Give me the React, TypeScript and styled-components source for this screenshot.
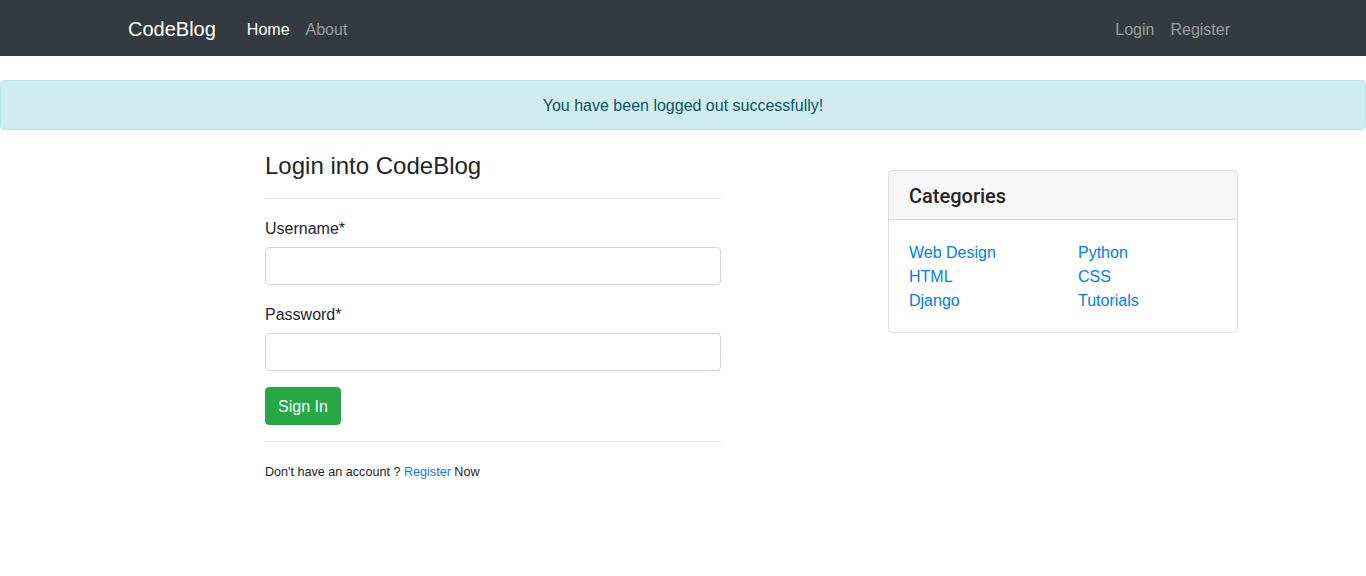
import React from "react";
import styled, { createGlobalStyle } from "styled-components";

const Global = createGlobalStyle`
  html, body { margin: 0; padding: 0; background: #fff; }
  body {
    font-family: "Liberation Sans", Arial, sans-serif;
    font-size: 16px;
    line-height: 1.5;
    color: #212529;
  }
  * { box-sizing: border-box; }
`;

const NavBar = styled.nav`
  background: #343a40;
  height: 56px;
`;

const NavInner = styled.div`
  width: 1140px;
  margin: 0 auto;
  padding: 0 15px;
  height: 100%;
  display: flex;
  align-items: center;
`;

const Brand = styled.a`
  font-size: 20px;
  line-height: 30px;
  padding-top: 2px;
  color: #fff;
  text-decoration: none;
  margin-right: 23px;
`;

const NavGroup = styled.div<{ $right?: boolean }>`
  display: flex;
  margin-left: ${(p) => (p.$right ? "auto" : "0")};
`;

const NavLink = styled.a<{ $active?: boolean }>`
  padding: 10px 8px 6px;
  color: ${(p) => (p.$active ? "#fff" : "rgba(255,255,255,0.5)")};
  text-decoration: none;
  font-size: 16px;
  line-height: 24px;
`;

const Alert = styled.div`
  margin-top: 24px;
  margin-bottom: 16px;
  padding: 13px 20px 11px;
  background: #d1ecf1;
  border: 1px solid #bee5eb;
  border-radius: 4px;
  color: #0c5460;
  text-align: center;
  line-height: 24px;
`;

const Container = styled.main`
  width: 1140px;
  margin: 0 auto;
  padding: 0 15px;
  display: grid;
  grid-template-columns: 730px 350px;
  column-gap: 30px;
`;

const FormColumn = styled.section`
  width: 456px;
  justify-self: center;
`;

const Heading = styled.h4`
  margin: 5px 0 16px;
  padding-bottom: 18px;
  border-bottom: 1px solid #dee2e6;
  font-size: 24px;
  font-weight: 400;
  line-height: 29px;
`;

const FormGroup = styled.div`
  margin-bottom: 16px;
`;

const Label = styled.label`
  display: block;
  margin-bottom: 6px;
  padding-top: 2px;
  line-height: 24px;
  font-size: 16px;
`;

const Input = styled.input`
  display: block;
  width: 100%;
  height: 38px;
  padding: 6px 12px;
  border: 1px solid #ced4da;
  border-radius: 4px;
  font: inherit;
  &:focus { outline: none; }
`;

const Button = styled.button`
  display: block;
  height: 38px;
  padding: 2px 12px 0;
  background: #28a745;
  border: 1px solid #28a745;
  border-radius: 4px;
  color: #fff;
  font-family: inherit;
  font-size: 16px;
  line-height: 24px;
  cursor: pointer;
`;

const Footer = styled.div`
  margin-top: 16px;
  padding-top: 21px;
  border-top: 1px solid #e5e5e5;
  font-size: 12.6px;
  line-height: 19px;
`;

const Link = styled.a`
  color: #007bff;
  text-decoration: none;
`;

const Card = styled.aside`
  margin-top: 24px;
  align-self: start;
  border: 1px solid rgba(0, 0, 0, 0.125);
  border-radius: 4px;
  overflow: hidden;
`;

const CardHeader = styled.div`
  padding: 13px 20px 11px;
  background: rgba(0, 0, 0, 0.03);
  border-bottom: 1px solid rgba(0, 0, 0, 0.125);
`;

const CardTitle = styled.h5`
  margin: 0;
  font-family: Roboto, "Liberation Sans", sans-serif;
  font-size: 20px;
  font-weight: 500;
  line-height: 24px;
  color: #212529;
`;

const CardBody = styled.div`
  padding: 21px 20px 19px;
  display: grid;
  grid-template-columns: 169px 1fr;
`;

const List = styled.ul`
  list-style: none;
  margin: 0;
  padding: 0;
  line-height: 24px;
`;

export default function App() {
  return (
    <>
      <Global />
      <NavBar>
        <NavInner>
          <Brand href="#">CodeBlog</Brand>
          <NavGroup>
            <NavLink $active href="#">Home</NavLink>
            <NavLink href="#">About</NavLink>
          </NavGroup>
          <NavGroup $right>
            <NavLink href="#">Login</NavLink>
            <NavLink href="#">Register</NavLink>
          </NavGroup>
        </NavInner>
      </NavBar>
      <Alert>You have been logged out successfully!</Alert>
      <Container>
        <FormColumn>
          <Heading>Login into CodeBlog</Heading>
          <FormGroup>
            <Label htmlFor="username">Username*</Label>
            <Input id="username" type="text" />
          </FormGroup>
          <FormGroup>
            <Label htmlFor="password">Password*</Label>
            <Input id="password" type="password" />
          </FormGroup>
          <Button type="button">Sign In</Button>
          <Footer>
            Don't have an account ? <Link href="#">Register</Link> Now
          </Footer>
        </FormColumn>
        <Card>
          <CardHeader>
            <CardTitle>Categories</CardTitle>
          </CardHeader>
          <CardBody>
            <List>
              <li><Link href="#">Web Design</Link></li>
              <li><Link href="#">HTML</Link></li>
              <li><Link href="#">Django</Link></li>
            </List>
            <List>
              <li><Link href="#">Python</Link></li>
              <li><Link href="#">CSS</Link></li>
              <li><Link href="#">Tutorials</Link></li>
            </List>
          </CardBody>
        </Card>
      </Container>
    </>
  );
}
